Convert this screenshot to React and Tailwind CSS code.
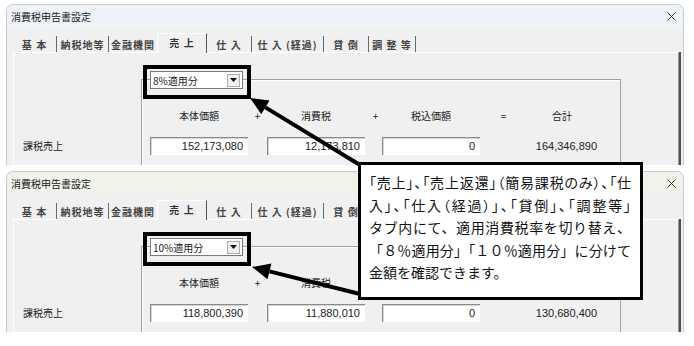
import React from 'react';

const UI_FONT = "font-['Noto_Sans_CJK_JP','Noto_Sans',sans-serif]";

const TABS = [
  { label: '基 本', w: 'w-[44px]' },
  { label: '納税地等', w: 'w-[52px]' },
  { label: '金融機関', w: 'w-[48px]', noSep: true },
  { label: '売 上', w: 'w-[50px]', active: true },
  { label: '仕 入', w: 'w-[45px]' },
  { label: '仕 入 (経過)', w: 'w-[72px]' },
  { label: '貸 倒', w: 'w-[45px]' },
  { label: '調 整 等', w: 'w-[47px]' },
];

const Tab = ({ label, w, active, noSep }) => {
  if (active) {
    return (
      <div className={`${w} h-[20px] -mb-px relative z-10 bg-[#f0f0f0] border-t border-l border-white border-r border-r-[#555] flex items-center justify-center font-bold text-[10px] text-[#333] pb-[2px] whitespace-pre tracking-[1px]`}>
        {label}
      </div>
    );
  }
  return (
    <div className={`${w} h-[16px] flex items-center justify-center font-bold text-[10px] text-[#444] whitespace-pre tracking-[1px] ${noSep ? '' : 'border-r border-[#6a6a6a]'}`}>
      {label}
    </div>
  );
};

const NumBox = ({ value }) => (
  <div className="h-[18px] bg-white border-t border-l border-[#8a8a8a] shadow-[inset_1px_1px_0_#d6d6d6] flex items-center justify-end pr-[5px] font-['Liberation_Sans',sans-serif] text-[11px] text-[#222]">
    {value}
  </div>
);

const TaxWindow = ({ rate, base, tax, total, titleBg }) => (
  <div className={`ml-[6px] w-[678px] h-[161px] overflow-hidden rounded-t-[7px] border-t border-l border-r border-[#c9c9c9] flex flex-col ${UI_FONT}`}>
    <div className={`h-[23px] shrink-0 ${titleBg} flex items-center justify-between pl-[4px] pr-[7px]`}>
      <span className="text-[10px] text-[#222]">消費税申告書設定</span>
      <svg width="9" height="9" viewBox="0 0 9 9">
        <path d="M0.5 0.5 L8.5 8.5 M8.5 0.5 L0.5 8.5" stroke="#333" strokeWidth="1" />
      </svg>
    </div>
    <div className="flex-1 bg-[#f0f0f0] pl-[6px] pr-[4px] flex flex-col">
      <div className="mt-[5px] h-[19px] flex items-end shrink-0">
        {TABS.map((t) => (
          <Tab key={t.label} {...t} />
        ))}
      </div>
      <div className="flex-1 flex border-t border-l border-white border-r border-r-[#9a9a9a] shadow-[2px_0_0_#505050]">
        <div className="w-[127px] shrink-0 pl-[9px] pt-[86px]">
          <div className="text-[10px] leading-[14px] text-[#222]">課税売上</div>
        </div>
        <div className="w-[480px] mt-[26px] border-t border-l border-r border-[#a0a0a0] shadow-[inset_1px_1px_0_#fff]">
          <div className="relative -mt-[9px] ml-[8px] w-[93px] h-[18px] bg-white border border-[#7a7a7a] flex items-center justify-between pl-[2px] pr-[2px]">
            <span className="text-[10px] text-[#222]">{rate}</span>
            <div className="w-[13px] h-[13px] bg-[#f0f0f0] border border-[#adadad] flex items-center justify-center">
              <svg width="7" height="4" viewBox="0 0 7 4">
                <path d="M0 0 H7 L3.5 4 Z" fill="#111" />
              </svg>
            </div>
            <div className="absolute -left-[8px] -top-[7px] w-[108px] h-[34px] border-4 border-black" />
          </div>
          <div className="ml-[8px] mt-[20px] grid grid-cols-[98px_19px_98px_17px_98px_47px_70px] text-[10px] leading-[14px] text-[#222]">
            <span className="text-center">本体価額</span>
            <span className="text-center">+</span>
            <span className="text-center">消費税</span>
            <span className="text-center pl-[4px]">+</span>
            <span className="text-center">税込価額</span>
            <span className="text-center">=</span>
            <span className="text-center">合計</span>
          </div>
          <div className="ml-[8px] mt-[14px] grid grid-cols-[98px_19px_98px_17px_98px_47px_70px] items-center">
            <NumBox value={base} />
            <span />
            <NumBox value={tax} />
            <span />
            <NumBox value="0" />
            <span />
            <span className="text-right font-['Liberation_Sans',sans-serif] text-[11px] text-[#222]">{total}</span>
          </div>
        </div>
      </div>
    </div>
  </div>
);

const Arrow = ({ tip, tail }) => {
  const dx = tail[0] - tip[0];
  const dy = tail[1] - tip[1];
  const len = Math.hypot(dx, dy);
  const ux = dx / len;
  const uy = dy / len;
  const bx = tip[0] + ux * 18;
  const by = tip[1] + uy * 18;
  const px = -uy * 8;
  const py = ux * 8;
  return (
    <g>
      <line x1={bx} y1={by} x2={tail[0]} y2={tail[1]} stroke="#000" strokeWidth="4" />
      <polygon points={`${tip[0]},${tip[1]} ${bx + px},${by + py} ${bx - px},${by - py}`} fill="#000" />
    </g>
  );
};

const App = () => {
  return (
    <div className="relative w-[694px] h-[346px] bg-white overflow-hidden pt-[4px]">
      <TaxWindow rate="8%適用分" base="152,173,080" tax="12,173,810" total="164,346,890" titleBg="bg-[#eef3f9]" />
      <div className="mt-[6px]">
        <TaxWindow rate="10%適用分" base="118,800,390" tax="11,880,010" total="130,680,400" titleBg="bg-[#f0f3ea]" />
      </div>

      <svg className="absolute left-0 top-0 pointer-events-none" width="694" height="346">
        <Arrow tip={[250, 98]} tail={[360, 165]} />
        <Arrow tip={[252, 267]} tail={[360, 294]} />
      </svg>

      {/* 吹き出し */}
      <div className="absolute left-[358px] top-[162px] w-[285px] h-[138px] bg-white border-[3px] border-black pl-[8px] pt-[6px] font-['Noto_Sans_CJK_JP',sans-serif] text-[14px] leading-[22.5px] text-[#111]">
        <div className="w-[262px] whitespace-nowrap [font-feature-settings:'palt'] [text-align-last:justify]">「売上」、「売上返還」（簡易課税のみ）、「仕</div>
        <div className="w-[262px] whitespace-nowrap [font-feature-settings:'palt'] [text-align-last:justify]">入」、「仕入（経過）」、「貸倒」、「調整等」</div>
        <div className="w-[262px] whitespace-nowrap [text-align-last:justify]">タブ内にて、適用消費税率を切り替え、</div>
        <div className="w-[262px] whitespace-nowrap [text-align-last:justify]">「８％適用分」「１０％適用分」に分けて</div>
        <div className="whitespace-nowrap">金額を確認できます。</div>
      </div>
    </div>
  );
};

export default App;
